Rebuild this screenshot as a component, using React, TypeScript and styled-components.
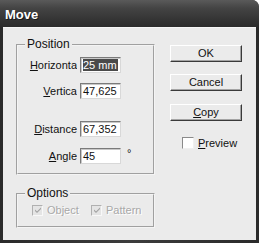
import React from "react";
import styled, { createGlobalStyle } from "styled-components";

const GlobalStyle = createGlobalStyle`
  html, body { margin: 0; padding: 0; background: #ffffff; }
  * { box-sizing: border-box; }
`;

const Window = styled.div`
  width: 259px;
  height: 243px;
  display: flex;
  flex-direction: column;
  background: linear-gradient(90deg, #2a2a2a, #3c3c3c 50%, #2a2a2a);
  border-radius: 0 7px 0 0;
  overflow: hidden;
  font-family: "Liberation Sans", Arial, sans-serif;
  font-size: 11px;
  color: #111;
`;

const TitleBar = styled.div`
  height: 27px;
  flex: none;
  display: flex;
  align-items: center;
  padding: 2px 0 0 5px;
  background: linear-gradient(180deg, #5a5a5a 0%, #444 30%, #353535 70%, #2c2c2c 100%);
  color: #ffffff;
  font-weight: bold;
  font-size: 13px;
  text-shadow: 1px 1px 0 #1a1a1a;
`;

const Body = styled.div`
  flex: 1;
  margin: 0 3px 3px 3px;
  background: #ebebeb;
  border-top: 1px solid #f6f6f6;
  display: flex;
  gap: 15px;
  padding: 10px 0 0 13px;
`;

const LeftCol = styled.div`
  display: flex;
  flex-direction: column;
  gap: 12px;
`;

const Group = styled.fieldset<{ $pt: number; $pb: number }>`
  width: 139px;
  margin: 0;
  padding: ${(p) => p.$pt}px 0 ${(p) => p.$pb}px 0;
  border: 2px groove #f4f4f4;
  min-inline-size: 0;
`;

const Legend = styled.legend`
  margin-left: 7px;
  padding: 0 2px;
  font-size: 12px;
  line-height: 13px;
  color: #111;
`;

const FieldRow = styled.div<{ $mt: number }>`
  display: grid;
  grid-template-columns: 59px 41px auto;
  column-gap: 3px;
  align-items: center;
  margin-top: ${(p) => p.$mt}px;
  height: 16px;
`;

const Label = styled.span`
  text-align: right;
  white-space: nowrap;
  overflow: hidden;
`;

const U = styled.span`
  text-decoration: underline;
`;

const TextBox = styled.div`
  height: 16px;
  background: #ffffff;
  border: 1px solid;
  border-color: #7a7a7a #d8d8d8 #d8d8d8 #7a7a7a;
  box-shadow: inset 1px 1px 0 #c8c8c8;
  padding: 1px 0 0 2px;
  line-height: 13px;
  white-space: nowrap;
  overflow: hidden;
`;

const Selected = styled.span`
  background: #4a4a4a;
  color: #ffffff;
  padding: 0 1px 0 0;
`;

const Degree = styled.span`
  padding-left: 3px;
  font-size: 11px;
  align-self: start;
  line-height: 10px;
`;

const OptionsRow = styled.div`
  display: flex;
  align-items: center;
  padding-left: 14px;
  gap: 4px;
`;

const Check = styled.span<{ $disabled?: boolean; $size: number }>`
  width: ${(p) => p.$size}px;
  height: ${(p) => p.$size}px;
  flex: none;
  background: ${(p) => (p.$disabled ? "#e4e4e4" : "#ffffff")};
  border: 1px solid;
  border-color: ${(p) =>
    p.$disabled ? "#b0b0b0 #f8f8f8 #f8f8f8 #b0b0b0" : "#8a8a8a #f0f0f0 #f0f0f0 #8a8a8a"};
  display: flex;
  align-items: center;
  justify-content: center;
`;

const DisabledText = styled.span<{ $w: number }>`
  color: #a8a8a8;
  text-shadow: 1px 1px 0 #ffffff;
  width: ${(p) => p.$w}px;
  overflow: hidden;
  white-space: nowrap;
  margin-right: 6px;
`;

const RightCol = styled.div`
  display: flex;
  flex-direction: column;
  padding-top: 7px;
  width: 72px;
`;

const Button = styled.div<{ $mt: number }>`
  height: 17px;
  margin-top: ${(p) => p.$mt}px;
  display: flex;
  align-items: center;
  justify-content: center;
  background: #ebebeb;
  border: 1px solid;
  border-color: #ffffff #3a3a3a #3a3a3a #ffffff;
  box-shadow: inset -1px -1px 0 #a4a4a4;
  color: #111;
  line-height: 13px;
`;

const PreviewRow = styled.div`
  display: flex;
  align-items: center;
  gap: 4px;
  margin-top: 16px;
  padding-left: 12px;
`;

const PreviewText = styled.span`
  white-space: nowrap;
`;

const CheckMark = () => (
  <svg width="8" height="8" viewBox="0 0 8 8">
    <path d="M1 3.5 L3 5.5 L7 1.5 L7 3 L3 7 L1 5 Z" fill="#a0a0a0" />
  </svg>
);

export default function App() {
  return (
    <>
      <GlobalStyle />
      <Window>
        <TitleBar>Move</TitleBar>
        <Body>
          <LeftCol>
            <Group $pt={0} $pb={9}>
              <Legend>Position</Legend>
              <FieldRow $mt={6}>
                <Label>
                  <U>H</U>orizonta
                </Label>
                <TextBox>
                  <Selected>25 mm</Selected>
                </TextBox>
              </FieldRow>
              <FieldRow $mt={10}>
                <Label>
                  <U>V</U>ertica
                </Label>
                <TextBox>47,625</TextBox>
              </FieldRow>
              <FieldRow $mt={22}>
                <Label>
                  <U>D</U>istance
                </Label>
                <TextBox>67,352</TextBox>
              </FieldRow>
              <FieldRow $mt={11}>
                <Label>
                  <U>A</U>ngle
                </Label>
                <TextBox>45</TextBox>
                <Degree>°</Degree>
              </FieldRow>
            </Group>
            <Group $pt={4} $pb={10}>
              <Legend>Options</Legend>
              <OptionsRow>
                <Check $disabled $size={11}>
                  <CheckMark />
                </Check>
                <DisabledText $w={34}>Object</DisabledText>
                <Check $disabled $size={11}>
                  <CheckMark />
                </Check>
                <DisabledText $w={38}>Pattern</DisabledText>
              </OptionsRow>
            </Group>
          </LeftCol>
          <RightCol>
            <Button $mt={0}>OK</Button>
            <Button $mt={12}>Cancel</Button>
            <Button $mt={13}>
              <span>
                <U>C</U>opy
              </span>
            </Button>
            <PreviewRow>
              <Check $size={12} />
              <PreviewText>
                <U>P</U>review
              </PreviewText>
            </PreviewRow>
          </RightCol>
        </Body>
      </Window>
    </>
  );
}
